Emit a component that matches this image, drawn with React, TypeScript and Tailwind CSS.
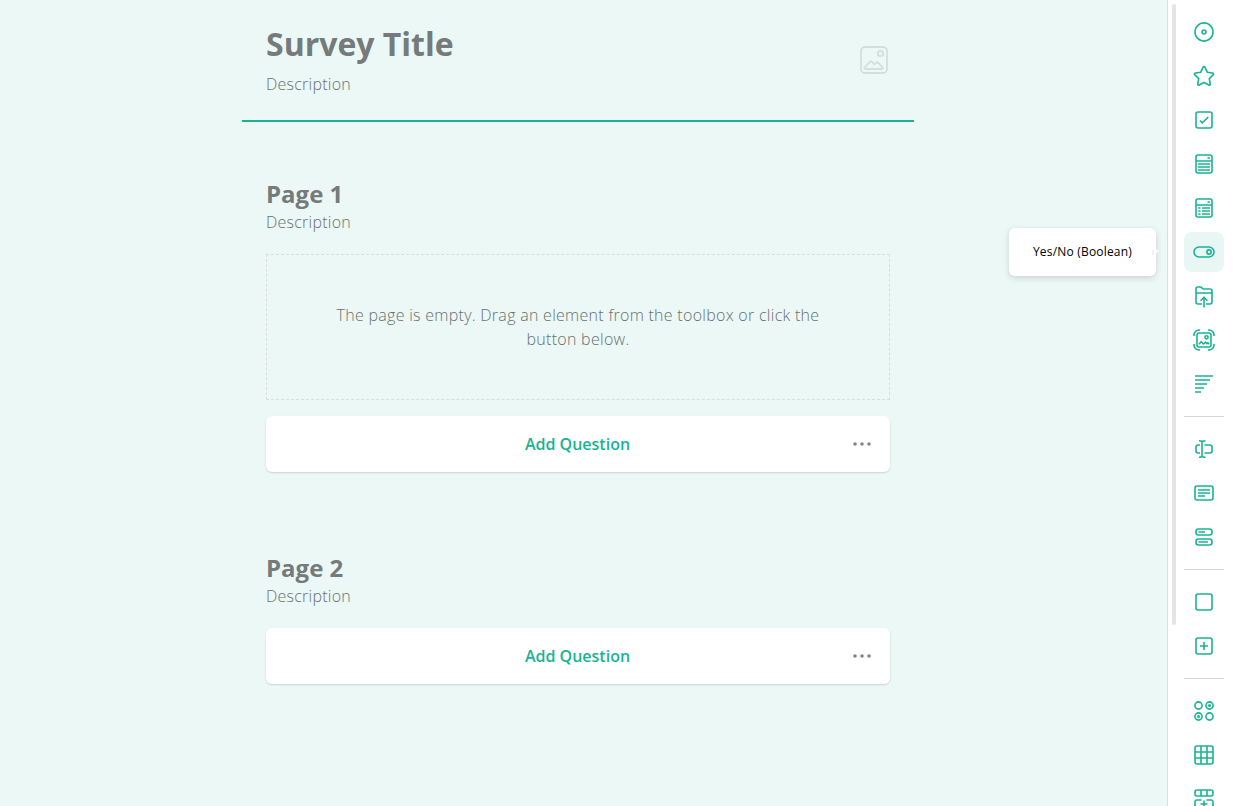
import React from "react";

const icons: Record<string, React.ReactNode> = {
  radio: (
    <>
      <circle cx="12" cy="12" r="9.1" />
      <circle cx="12" cy="12" r="2" />
    </>
  ),
  rating: (
    <path d="M12 2.6c.4 0 .7.25.9.6l2.4 5 5.4.8c.85.15 1.15 1.1.55 1.7l-3.95 3.9.95 5.4c.15.85-.7 1.45-1.45 1.05L12 18.5l-4.8 2.55c-.75.4-1.6-.2-1.45-1.05l.95-5.4-3.95-3.9C2.15 10.1 2.45 9.15 3.3 9l5.4-.8 2.4-5c.2-.35.5-.6.9-.6z" />
  ),
  checkbox: (
    <>
      <rect x="4" y="4" width="16" height="16" rx="2" />
      <path d="M8 12.5l2.3 2.3L16.2 9" />
    </>
  ),
  dropdown: (
    <>
      <rect x="4" y="3" width="16" height="18" rx="2" />
      <path d="M4 9h16M15.5 6H18M6 12h12M6 15h12M6 18h12" />
    </>
  ),
  tagbox: (
    <>
      <rect x="4" y="3" width="16" height="18" rx="2" />
      <path d="M4 9h16M15.5 6H18M6.2 12h2.3M6.2 15h2.3M6.2 18h2.3M10 12h8M10 15h8M10 18h8" />
    </>
  ),
  boolean: (
    <>
      <rect x="2" y="7" width="20" height="10" rx="5" />
      <circle cx="17" cy="12" r="2.1" />
    </>
  ),
  file: (
    <>
      <path d="M10 20H6a2 2 0 0 1-2-2V5a2 2 0 0 1 2-2h2c1 0 1.6.4 2 1l.4.5c.3.35.7.5 1.1.5H18a2 2 0 0 1 2 2v11a2 2 0 0 1-2 2h-4" />
      <path d="M4 9h16M12 23.5V13.5M8.5 16.8L12 13.3l3.5 3.5" />
    </>
  ),
  imagepicker: (
    <>
      <rect x="5" y="5" width="14" height="14" rx="2" />
      <circle cx="14.5" cy="9.3" r="1.6" />
      <path d="M7 16.2l2.2-2.5 2.3 2.3 2-1.8 1.4 1.5 1-.9 1.3 1.4" />
      <path d="M2 8V7a5 5 0 0 1 5-5h1M16 2h1a5 5 0 0 1 5 5v1M22 16v1a5 5 0 0 1-5 5h-1M8 22H7a5 5 0 0 1-5-5v-1" />
    </>
  ),
  ranking: <path d="M3 4h18M3 8h15M3 12h12M3 16h9M3 20h6" />,
  text: (
    <path d="M7 3.8c1.8 0 3 .4 3 1.2v14c0 .8-1.2 1.2-3 1.2M13.5 3.8c-2.2 0-3.5.4-3.5 1.2M13.5 20.2c-2.2 0-3.5-.4-3.5-1.2M8 8H6a2 2 0 0 0-2 2v4a2 2 0 0 0 2 2h2M12.5 8H18a2 2 0 0 1 2 2v4a2 2 0 0 1-2 2h-5.5" />
  ),
  comment: (
    <>
      <rect x="3" y="5" width="18" height="14" rx="2" />
      <path d="M6 9h12M6 12h12M6 15h7" />
    </>
  ),
  multipletext: (
    <>
      <rect x="4" y="4" width="16" height="6" rx="2.4" />
      <rect x="4" y="14" width="16" height="6" rx="2.4" />
      <path d="M6.5 7H13M6.5 17H16" />
    </>
  ),
  panel: <rect x="4" y="4" width="16" height="16" rx="2" />,
  paneldynamic: (
    <>
      <rect x="4" y="4" width="16" height="16" rx="2" />
      <path d="M12 8v8M8 12h8" />
    </>
  ),
  matrix: (
    <>
      <circle cx="6.5" cy="6.5" r="3.6" />
      <circle cx="17.5" cy="6.5" r="3.6" />
      <circle cx="6.5" cy="17.5" r="3.6" />
      <circle cx="17.5" cy="17.5" r="3.6" />
      <circle cx="17.5" cy="6.5" r=".7" />
      <circle cx="6.5" cy="17.5" r=".7" />
    </>
  ),
  matrixdropdown: (
    <>
      <rect x="3" y="3" width="18" height="18" rx="2" />
      <path d="M9 3v18M15 3v18M3 9h18M3 15h18" />
    </>
  ),
  matrixdynamic: (
    <>
      <rect x="3" y="3" width="18" height="6" rx="2" />
      <path d="M9 3v6M15 3v6M9.5 13H5a2 2 0 0 0-2 2v4a2 2 0 0 0 2 2h4.5M14.5 13H19a2 2 0 0 1 2 2v4a2 2 0 0 1-2 2h-4.5M12 13.5v7M8.5 17h7" />
    </>
  ),
};

const groups = [
  ["radio", "rating", "checkbox", "dropdown", "tagbox", "boolean", "file", "imagepicker", "ranking"],
  ["text", "comment", "multipletext"],
  ["panel", "paneldynamic"],
  ["matrix", "matrixdropdown", "matrixdynamic"],
];

function Tool({ name }: { name: string }) {
  const active = name === "boolean";
  return (
    <div
      className={`relative flex size-10 shrink-0 items-center justify-center rounded-lg text-[#19b394] ${
        active ? "bg-[#e8f7f4]" : ""
      }`}
    >
      <svg className="size-6" viewBox="0 0 24 24" fill="none" stroke="currentColor" strokeWidth="1.6">
        {icons[name]}
      </svg>
      {active && (
        <div className="absolute top-1/2 right-[68px] flex h-12 w-[147px] -translate-y-1/2 items-center justify-center rounded-md bg-white text-xs tracking-[0.19px] whitespace-nowrap text-black shadow-[0_2px_6px_rgba(0,0,0,0.15)]">
          Yes/No (Boolean)
          <svg className="absolute top-[21px] -right-[3px] h-2 w-[7px]" viewBox="0 0 7 8">
            <path d="M0 1h7L2 6H0z" fill="#f3f3f3" />
            <path d="M2 1h5L2 6z" fill="#fff" />
          </svg>
        </div>
      )}
    </div>
  );
}

function AddQuestion() {
  return (
    <div className="relative flex h-14 items-center justify-center rounded-md bg-white pr-px font-semibold text-[#19b394] shadow-[0_1px_2px_rgba(0,0,0,0.15)]">
      Add Question
      <svg className="absolute right-4 h-6 w-6" viewBox="0 0 24 24" fill="#858585">
        <circle cx="5" cy="12" r="1.8" />
        <circle cx="12" cy="12" r="1.8" />
        <circle cx="19" cy="12" r="1.8" />
      </svg>
    </div>
  );
}

function PageHeading({ title }: { title: string }) {
  return (
    <>
      <h2 className="text-2xl leading-8 font-bold">{title}</h2>
      <p className="font-light tracking-[0.24px] text-[#6a706f]">Description</p>
    </>
  );
}

export default function App() {
  return (
    <div className="flex h-[806px] w-[1240px] overflow-hidden bg-[#ebf8f6] font-['Open_Sans',sans-serif] text-base text-[#757b7a]">
      <main className="w-[1167px] pl-[242px]">
        <div className="w-[672px]">
          <header className="flex h-[122px] justify-between border-b-2 border-[#19b394] px-6 pt-5">
            <div>
              <h1 className="text-[32px] leading-[48px] font-bold">Survey Title</h1>
              <p className="mt-1 font-light tracking-[0.24px] text-[#6a706f]">Description</p>
            </div>
            <svg className="mt-6 h-8 w-8" viewBox="0 0 32 32" fill="none" stroke="#d3dfdd" strokeWidth="1.8" strokeLinejoin="round">
              <rect x="3" y="3" width="26" height="26" rx="4" />
              <circle cx="22.5" cy="9.5" r="2.7" />
              <path d="M7.5 25c-1 0-1.4-1-.8-1.7l5.2-5.5c.6-.6 1.4-.6 2 0l2.5 2.7 1.8-1.7c.6-.6 1.4-.6 2 0l4.3 4.5c.6.7.2 1.7-.8 1.7z" />
            </svg>
          </header>
          <section className="px-6 pt-14">
            <PageHeading title="Page 1" />
            <div className="mt-5 mb-4 flex h-[146px] items-center justify-center border border-dashed border-[#d9dedd] px-16 text-center font-light tracking-[0.28px] text-[#6a706f]">
              <p className="w-[492px]">The page is empty. Drag an element from the toolbox or click the button below.</p>
            </div>
            <AddQuestion />
          </section>
          <section className="px-6 pt-20">
            <PageHeading title="Page 2" />
            <div className="mt-5">
              <AddQuestion />
            </div>
          </section>
        </div>
      </main>
      <aside className="flex w-[73px] border-l border-[#d9dedd] bg-white pl-1">
        <div className="mt-1 h-[621px] w-1 rounded-full bg-[#e4e4e4]" />
        <div className="ml-2 flex flex-col pt-3">
          {groups.map((group, i) => (
            <React.Fragment key={i}>
              {i > 0 && <div className="my-3 h-px w-10 shrink-0 bg-[#d6d6d6]" />}
              <div className="flex shrink-0 flex-col gap-1">
                {group.map((name) => (
                  <Tool key={name} name={name} />
                ))}
              </div>
            </React.Fragment>
          ))}
        </div>
      </aside>
    </div>
  );
}
